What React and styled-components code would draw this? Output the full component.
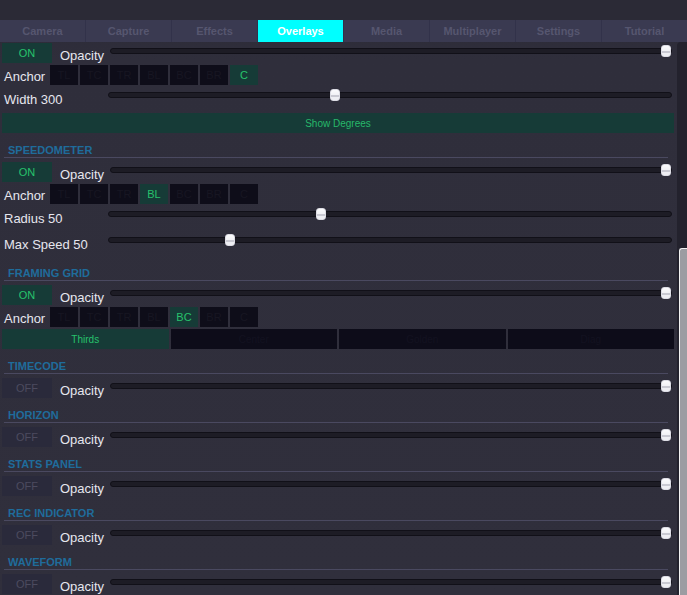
import React from 'react'
import styled, { createGlobalStyle } from 'styled-components'

const GlobalStyle = createGlobalStyle`
  html, body {
    margin: 0;
    padding: 0;
    height: 100%;
    overflow: hidden;
    background: #2f2e3b;
  }
  body {
    font-family: "Liberation Sans", Arial, sans-serif;
  }
`

const Page = styled.div`
  width: 687px;
  height: 595px;
  display: flex;
  flex-direction: column;
  background: linear-gradient(180deg, #2b2a36 0px, #2f2e3b 60px, #302f3c 100%);
  overflow: hidden;
`

const TopStrip = styled.div`
  height: 20px;
  background: #2b2a36;
`

const TabBar = styled.nav`
  display: flex;
  height: 22px;
  background: #3a3a51;
`

const Tab = styled.div`
  flex: 1;
  display: flex;
  justify-content: center;
  align-items: center;
  font-size: 11px;
  font-weight: bold;
  color: ${({ $active }) => ($active ? '#ffffff' : '#56566f')};
  background: ${({ $active }) => ($active ? '#00ffff' : '#3a3a51')};
  border-right: 1px solid #32324a;
  &:last-child { border-right: none; }
`

const Body = styled.div`
  flex: 1;
  display: flex;
  min-height: 0;
`

const Content = styled.div`
  width: 672px;
  padding: 1px 3px 0 2px;
  display: flex;
  flex-direction: column;
  gap: 2px;
`

const Scrollbar = styled.div`
  width: 10px;
  background: #23222d;
  border-radius: 4px 0 0 0;
  display: flex;
  flex-direction: column;
`

const ScrollThumb = styled.div`
  margin-top: 206px;
  margin-left: 2px;
  flex: 1;
  background: #9c9ca2;
  border-left: 1px solid #f2f2f2;
  border-top: 1px solid #f2f2f2;
  border-radius: 3px 0 0 0;
`

const Row = styled.div`
  display: flex;
  align-items: flex-start;
  height: ${({ $h }) => $h || 20}px;
`

const Toggle = styled.div`
  width: 50px;
  height: 20px;
  display: flex;
  justify-content: center;
  align-items: center;
  font-size: 11px;
  color: ${({ $on }) => ($on ? '#27c26c' : '#4c4b5f')};
  background: ${({ $on }) => ($on ? '#163b37' : '#2a2a3b')};
`

const Label = styled.div`
  width: ${({ $w }) => $w}px;
  padding-left: ${({ $pl }) => $pl || 0}px;
  padding-top: ${({ $pt }) => ($pt === undefined ? 5 : $pt)}px;
  flex-shrink: 0;
  font-size: 13px;
  line-height: 15px;
  color: #e6e6ee;
  white-space: nowrap;
`

const Track = styled.div`
  position: relative;
  flex: 1;
  height: 6px;
  margin: 5px 2px 0 0;
  box-sizing: border-box;
  background: #1d1c25;
  border: 1px solid #111018;
  border-radius: 3px;
`

const Thumb = styled.div`
  position: absolute;
  top: -4px;
  left: calc((100% - 10px) * ${({ $value }) => $value});
  width: 10px;
  height: 12px;
  box-sizing: border-box;
  border-radius: 3px;
  border: 1px solid #dcdce4;
  background: linear-gradient(180deg, #fbfbfd 0%, #f1f1f5 50%, #c9c9d2 55%, #c9c9d2 70%, #eeeef3 75%);
`

const Anchors = styled.div`
  display: flex;
  gap: 2px;
`

const AnchorButton = styled.div`
  width: 28px;
  height: 20px;
  display: flex;
  justify-content: center;
  align-items: center;
  font-size: 11px;
  color: ${({ $active }) => ($active ? '#27c26c' : '#171622')};
  background: ${({ $active }) => ($active ? '#163b37' : '#0e0d19')};
`

const WideButton = styled.div`
  height: 20px;
  display: flex;
  justify-content: center;
  align-items: center;
  font-size: 10px;
  color: #27b86a;
  background: #163b37;
`

const SectionHeader = styled.div`
  margin: 0 6px 2px 2px;
  padding: 8px 0 0 4px;
  font-size: 11px;
  font-weight: bold;
  line-height: 14px;
  color: #1f6c9b;
  border-bottom: 1px solid #4a4960;
`

const ModeRow = styled.div`
  display: flex;
  gap: 2px;
`

const ModeButton = styled.div`
  flex: 1;
  height: 20px;
  display: flex;
  justify-content: center;
  align-items: center;
  font-size: 10px;
  color: ${({ $active }) => ($active ? '#27c26c' : '#131220')};
  background: ${({ $active }) => ($active ? '#163b37' : '#0d0c19')};
`

const TABS = ['Camera', 'Capture', 'Effects', 'Overlays', 'Media', 'Multiplayer', 'Settings', 'Tutorial']
const ANCHORS = ['TL', 'TC', 'TR', 'BL', 'BC', 'BR', 'C']
const MODES = ['Thirds', 'Center', 'Golden', 'Diag']

const Slider = ({ value }) => (
  <Track>
    <Thumb $value={value} />
  </Track>
)

const OpacityRow = ({ on }) => (
  <Row>
    <Toggle $on={on}>{on ? 'ON' : 'OFF'}</Toggle>
    <Label $w={50} $pl={8}>Opacity</Label>
    <Slider value={1} />
  </Row>
)

const AnchorRow = ({ active }) => (
  <Row>
    <Label $w={46} $pl={2} $pt={4}>Anchor</Label>
    <Anchors>
      {ANCHORS.map((a) => (
        <AnchorButton key={a} $active={a === active}>{a}</AnchorButton>
      ))}
    </Anchors>
  </Row>
)

const ValueRow = ({ label, value }) => (
  <Row $h={24}>
    <Label $w={104} $pl={2}>{label}</Label>
    <Slider value={value} />
  </Row>
)

const offSections = ['TIMECODE', 'HORIZON', 'STATS PANEL', 'REC INDICATOR', 'WAVEFORM']

const App = () => {
  return (
    <>
      <GlobalStyle />
      <Page>
        <TopStrip />
        <TabBar>
          {TABS.map((t) => (
            <Tab key={t} $active={t === 'Overlays'}>{t}</Tab>
          ))}
        </TabBar>
        <Body>
          <Content>
            <OpacityRow on />
            <AnchorRow active="C" />
            <ValueRow label="Width 300" value={0.4} />
            <WideButton>Show Degrees</WideButton>

            <SectionHeader>SPEEDOMETER</SectionHeader>
            <OpacityRow on />
            <AnchorRow active="BL" />
            <ValueRow label="Radius 50" value={0.375} />
            <ValueRow label="Max Speed 50" value={0.21} />

            <SectionHeader>FRAMING GRID</SectionHeader>
            <OpacityRow on />
            <AnchorRow active="BC" />
            <ModeRow>
              {MODES.map((m) => (
                <ModeButton key={m} $active={m === 'Thirds'}>{m}</ModeButton>
              ))}
            </ModeRow>

            {offSections.map((s) => (
              <React.Fragment key={s}>
                <SectionHeader>{s}</SectionHeader>
                <OpacityRow on={false} />
              </React.Fragment>
            ))}
          </Content>
          <Scrollbar>
            <ScrollThumb />
          </Scrollbar>
        </Body>
      </Page>
    </>
  )
}

export default App
